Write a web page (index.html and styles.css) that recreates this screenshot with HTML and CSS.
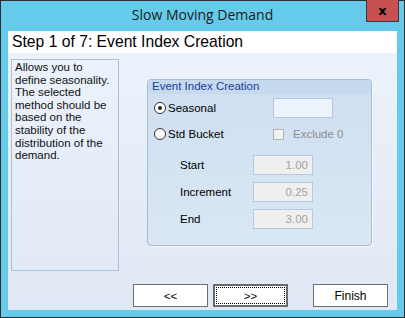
FILE: index.html
```html
<!DOCTYPE html>
<html lang="en">
<head>
    <meta charset="UTF-8">
    <title>Slow Moving Demand</title>
    <link rel="stylesheet" href="styles.css">
</head>
<body>
    <div class="window">
        <div class="titlebar">
            <span class="title">Slow Moving Demand</span>
            <button class="close">x</button>
        </div>
        <div class="client">
            <div class="step">Step 1 of 7: Event Index Creation</div>
            <div class="content">
                <div class="main">
                    <div class="info">Allows you to define seasonality. The selected method should be based on the stability of the distribution of the demand.</div>

                    <div class="group">
                        <div class="group-title">Event Index Creation</div>
                        <div class="choices">
                            <label class="radio-row"><span class="radio checked"></span>Seasonal</label>
                            <input type="text" class="box season-box">
                            <label class="radio-row"><span class="radio"></span>Std Bucket</label>
                            <label class="check-row"><span class="check"></span>Exclude 0</label>
                        </div>
                        <div class="fields">
                            <div class="field"><span>Start</span><span class="box disabled">1.00</span></div>
                            <div class="field"><span>Increment</span><span class="box disabled">0.25</span></div>
                            <div class="field"><span>End</span><span class="box disabled">3.00</span></div>
                        </div>
                    </div>
                </div>

                <div class="buttons">
                    <button class="btn">&lt;&lt;</button>
                    <button class="btn focused"><span>&gt;&gt;</span></button>
                    <button class="btn finish">Finish</button>
                </div>
            </div>
        </div>
    </div>
</body>
</html>
```

FILE: styles.css
```css
* {
    box-sizing: border-box;
}
body {
    margin: 0;
    font-family: "Liberation Sans", Arial, sans-serif;
    font-size: 11.5px;
    color: #000;
}
.window {
    position: relative;
    width: 405px;
    height: 318px;
    border: 1px solid #2d2d2d;
    background-color: #66cbea;
    padding: 0 7px 7px;
    display: flex;
    flex-direction: column;
}
.titlebar {
    height: 30px;
    display: flex;
    align-items: center;
    justify-content: center;
}
.title {
    font-family: "Open Sans", "Noto Sans", sans-serif;
    font-size: 14px;
    color: #1b1b1b;
    margin-top: -3px;
}
.close {
    position: absolute;
    top: -1px;
    right: 5px;
    width: 33px;
    height: 22px;
    padding: 0;
    border: 1px solid #3a3a3a;
    border-top: none;
    background-color: #c75050;
    color: #000;
    font-family: "DejaVu Sans", sans-serif;
    font-weight: bold;
    font-size: 13px;
    line-height: 16px;
}
.client {
    flex: 1;
    display: flex;
    flex-direction: column;
    background: linear-gradient(#ecf3fc, #e1e8f5);
}
.step {
    height: 22px;
    background-color: #fff;
    font-size: 15.7px;
    line-height: 22px;
    padding-left: 4px;
    color: #000;
}
.content {
    padding: 6px 0 0 3px;
}
.main {
    display: flex;
    align-items: flex-start;
}
.info {
    width: 108px;
    height: 212px;
    border: 1px solid #a9c0df;
    padding: 1px 4px 0 3px;
    line-height: 12.6px;
    color: #111;
}
.group {
    width: 225px;
    height: 167px;
    margin: 20px 0 0 28px;
    border: 1px solid #a9bcd4;
    border-radius: 4px;
    background: linear-gradient(#cfdff1, #d9e7f4);
    box-shadow: 1px 1px 0 #f4f8fd;
}
.group-title {
    height: 14px;
    padding-left: 4px;
    line-height: 13px;
    color: #22409a;
    background-color: #c5d9ef;
    border-radius: 3px 3px 0 0;
}
.choices {
    display: grid;
    grid-template-columns: 119px 1fr;
    grid-auto-rows: 20px;
    row-gap: 6px;
    align-items: center;
    padding: 4px 0 0 6px;
}
.radio-row, .check-row {
    display: flex;
    align-items: center;
}
.radio {
    width: 12px;
    height: 12px;
    margin-right: 2px;
    border: 1px solid #333;
    border-radius: 50%;
    background-color: #fff;
    display: flex;
    align-items: center;
    justify-content: center;
}
.radio.checked::after {
    content: "";
    width: 4px;
    height: 4px;
    border-radius: 50%;
    background-color: #222;
}
.check {
    width: 11px;
    height: 11px;
    margin-right: 9px;
    border: 1px solid #b3b3b3;
    background-color: #f2f2f2;
}
.check-row {
    color: #8d8d8d;
}
.box {
    width: 60px;
    height: 20px;
    border: 1px solid #b7c9e2;
    padding: 0 4px;
    font-family: inherit;
    font-size: 11.5px;
    line-height: 18px;
}
.season-box {
    background-color: #edf3fb;
}
.box.disabled {
    display: block;
    background-color: #efefef;
    color: #a3a3a3;
    text-align: right;
}
.fields {
    display: flex;
    flex-direction: column;
    gap: 7px;
    margin-top: 11px;
    padding-left: 32px;
}
.field {
    display: flex;
    align-items: center;
}
.field span:first-child {
    width: 73px;
}
.buttons {
    display: flex;
    margin: 13px 0 0 122px;
}
.btn {
    width: 75px;
    height: 23px;
    margin-right: 5px;
    padding: 0;
    border: 1px solid #6e6e6e;
    background-color: #fff;
    font-family: inherit;
    font-size: 11.5px;
    color: #000;
}
.btn.focused {
    border: 2px solid #6a6a6a;
    margin-right: 25px;
    padding: 1px;
}
.btn.focused span {
    display: block;
    height: 100%;
    line-height: 17px;
    border: 1px dotted #000;
}
.btn.finish {
    font-size: 12px;
}
```
